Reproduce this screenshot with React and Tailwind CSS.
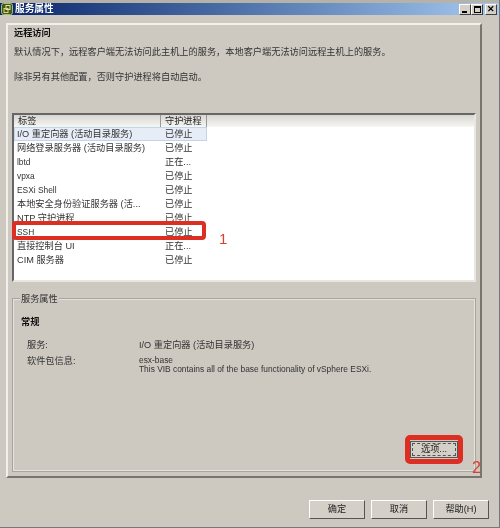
import React from "react";

const services = [
  ["I/O 重定向器 (活动目录服务)", "已停止"],
  ["网络登录服务器 (活动目录服务)", "已停止"],
  ["lbtd", "正在...", true],
  ["vpxa", "已停止", true],
  ["ESXi Shell", "已停止", true],
  ["本地安全身份验证服务器 (活...", "已停止"],
  ["NTP 守护进程", "已停止"],
  ["SSH", "已停止", true],
  ["直接控制台 UI", "正在..."],
  ["CIM 服务器", "已停止"],
];

const font = "font-['Liberation_Sans','Noto_Sans_CJK_SC',sans-serif]";

function CaptionButton({ children }) {
  return (
    <div className="w-[12px] h-[11px] bg-[#d4d0c8] border border-t-white border-l-white border-r-[#404040] border-b-[#404040] flex items-center justify-center">
      {children}
    </div>
  );
}

function DialogButton({ children }) {
  return (
    <div className="w-[56px] h-[19px] bg-[#d4d0c8] border border-t-white border-l-white border-r-[#555] border-b-[#555] flex items-center justify-center text-[#222]">
      {children}
    </div>
  );
}

export default function App() {
  return (
    <div className={`relative w-[500px] h-[528px] overflow-hidden bg-[#cdc9c0] text-[9.2px] text-[#333] flex flex-col blur-[0.3px] border-r border-b border-[#777] ${font}`}>
      {/* title bar */}
      <div className="h-[3px] bg-[#b5b2aa]"></div>
      <div className="h-[12px] flex items-center pl-[1px] pr-[2px] bg-gradient-to-r from-[#0a246a] to-[#a6caf0]">
        <svg width="12" height="12" viewBox="0 0 12 12" className="shrink-0">
          <rect x="0.5" y="0.5" width="11" height="11" rx="2" fill="#3c5a22" stroke="#9fc36a" />
          <rect x="5" y="2.5" width="4" height="4" fill="none" stroke="#e8e4a0" />
          <rect x="3" y="5.5" width="4" height="4" fill="none" stroke="#f0d070" />
        </svg>
        <span className="ml-[2px] text-white font-bold text-[9.7px] leading-none">服务属性</span>
        <div className="ml-auto flex items-center">
          <CaptionButton>
            <div className="w-[5px] h-[2px] bg-black mt-[5px] -ml-[2px]"></div>
          </CaptionButton>
          <div className="mr-[2px]">
            <CaptionButton>
              <div className="w-[7px] h-[7px] border border-black border-t-2"></div>
            </CaptionButton>
          </div>
          <CaptionButton>
            <span className="text-black text-[9px] font-bold leading-none">✕</span>
          </CaptionButton>
        </div>
      </div>

      {/* main panel */}
      <div className="mt-[8px] ml-[6px] w-[476px] h-[455px] border-2 border-t-[#f2f0ea] border-l-[#f2f0ea] border-r-[#77756f] border-b-[#77756f] px-[4px] flex flex-col">
        <div className="mt-[1px] pl-[2px] h-[14px] leading-[14px] font-bold text-[#111]">远程访问</div>
        <div className="mt-[5px] pl-[2px] h-[14px] leading-[14px]">
          默认情况下，远程客户端无法访问此主机上的服务，本地客户端无法访问远程主机上的服务。
        </div>
        <div className="mt-[11px] pl-[2px] h-[14px] leading-[14px]">除非另有其他配置，否则守护进程将自动启动。</div>

        {/* service table */}
        <div className="mt-[29px] h-[169px] w-[464px] bg-white border-2 border-t-[#666] border-l-[#666] border-r-[#e8e6e0] border-b-[#e8e6e0]">
          <div className="flex h-[12px] leading-[12px] bg-gradient-to-b from-[#d8d6d0] to-[#f6f6f4] text-[#222]">
            <div className="w-[147px] pl-[4px] border-r border-[#999]">标签</div>
            <div className="w-[46px] pl-[4px] border-r border-[#999]">守护进程</div>
          </div>
          {services.map(([name, state, latin], i) => (
            <div
              key={name}
              className={`flex w-[193px] h-[14px] leading-[14px] ${i === 0 ? "bg-[#e6edf7] outline outline-[#c4d4ea] -outline-offset-1" : ""}`}
            >
              <div className={`w-[147px] pl-[3px] whitespace-nowrap ${latin ? "text-[8.4px]" : ""}`}>{name}</div>
              <div className="pl-[4px]">{state}</div>
            </div>
          ))}
        </div>

        {/* properties group */}
        <div className="relative mt-[16px] h-[174px] w-[464px] border border-[#a8a59e] outline outline-[#e4e2dc] -outline-offset-2 pl-[8px] pr-[17px] pb-[13px] flex flex-col">
          <div className="absolute left-[7px] -top-[7px] px-[1px] bg-[#cdc9c0] leading-[14px]">服务属性</div>
          <div className="mt-[16px] font-bold text-[#111] leading-[14px]">常规</div>
          <div className="mt-[9px] grid grid-cols-[112px_1fr] pl-[6px] leading-[14px]">
            <div>服务:</div>
            <div>I/O 重定向器 (活动目录服务)</div>
          </div>
          <div className="mt-[2px] grid grid-cols-[112px_1fr] pl-[6px]">
            <div className="leading-[14px]">软件包信息:</div>
            <div className="text-[8.4px] leading-[9px] pt-[2px]">
              esx-base
              <div className="whitespace-nowrap">This VIB contains all of the base functionality of vSphere ESXi.</div>
            </div>
          </div>
          <div className="mt-auto flex justify-end">
            <div className="w-[48px] h-[17px] border border-[#555] flex items-center justify-center bg-[#d4d0c8]">
              <div className="w-[44px] h-[13px] border border-dashed border-[#555] flex items-center justify-center text-[#222]">选项...</div>
            </div>
          </div>
        </div>
      </div>

      {/* dialog buttons */}
      <div className="mt-[22px] pr-[10px] flex justify-end gap-[6px]">
        <DialogButton>确定</DialogButton>
        <DialogButton>取消</DialogButton>
        <DialogButton>帮助(H)</DialogButton>
      </div>

      {/* red annotations drawn over the screenshot */}
      <div className="absolute left-[12px] top-[221px] w-[194px] h-[19px] rounded-[4px] border-[4px] border-[#dd2e24]"></div>
      <div className="absolute left-[405px] top-[435px] w-[58px] h-[29px] rounded-[5px] border-[5px] border-[#dd2e24]"></div>
      <div className="absolute left-[219px] top-[231px] text-[15px] leading-[16px] text-[#d8402f]">1</div>
      <div className="absolute left-[472px] top-[460px] text-[16px] leading-[16px] text-[#d8402f]">2</div>
    </div>
  );
}
